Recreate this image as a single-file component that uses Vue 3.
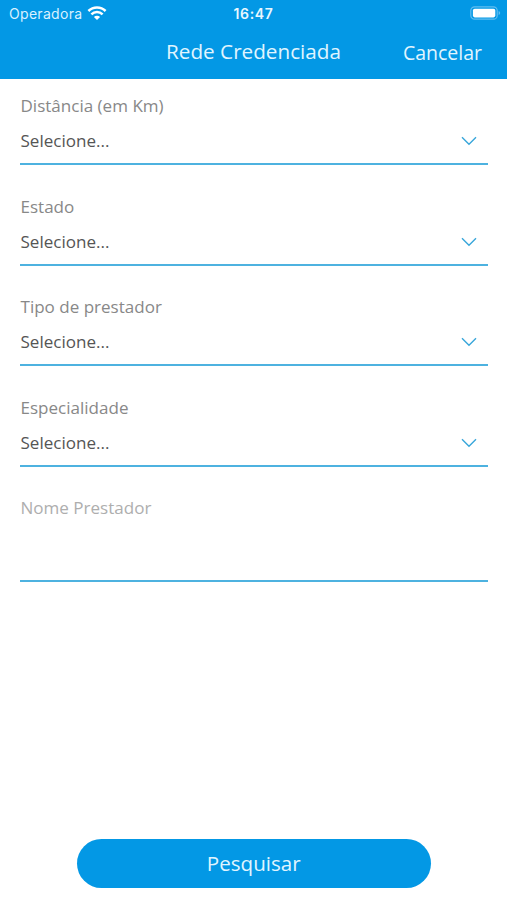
<script setup>
const fields = ['Distância (em Km)', 'Estado', 'Tipo de prestador', 'Especialidade']
</script>

<template>
  <main class="screen">
    <header class="header">
      <div class="status">
        <div class="carrier">
          <span class="carrier-name">Operadora</span>
          <svg class="wifi" width="20" height="14" viewBox="0 0 20 14">
            <path d="M1.4 5A12.3 12.3 0 0 1 18.6 5M4.4 8.3A8 8 0 0 1 15.6 8.3" fill="none" stroke="#fff" stroke-width="2.5" />
            <path d="M10 14L6.9 11A4.4 4.4 0 0 1 13.1 11Z" fill="#fff" />
          </svg>
        </div>
        <span class="time">16:47</span>
        <svg class="battery" width="31" height="14" viewBox="0 0 31 14">
          <rect x=".8" y=".8" width="26.4" height="12.4" rx="3.8" fill="none" stroke="#62bdf0" stroke-width="1.2" />
          <rect x="2.9" y="2.8" width="22.4" height="8.6" rx="1.8" fill="#fff" />
          <path d="M28.6 4.9Q30.2 5.5 30.2 7T28.6 9.1Z" fill="#62bdf0" />
        </svg>
      </div>
      <div class="nav">
        <h1 class="title">Rede Credenciada</h1>
        <button class="cancel">Cancelar</button>
      </div>
    </header>
    <form class="form">
      <div v-for="field in fields" :key="field" class="field">
        <span class="label">{{ field }}</span>
        <div class="select">
          <span>Selecione...</span>
          <svg width="16" height="10" viewBox="0 0 16 10">
            <path d="M1 1.2L8 8.2L15 1.2" fill="none" stroke="#38a6da" stroke-width="1.4" />
          </svg>
        </div>
      </div>
      <div class="field name"><span class="label">Nome Prestador</span></div>
    </form>
    <button class="search">Pesquisar</button>
  </main>
</template>

<style>
body { background: #fff; }
</style>

<style scoped>
.screen { width: 507px; height: 900px; display: flex; flex-direction: column; font-family: "Open Sans", sans-serif; background: #fff; overflow: hidden; }
.header { height: 79px; background: #0398e5; color: #fff; flex: none; }
.status { height: 26px; display: grid; grid-template-columns: 1fr auto 1fr; align-items: center; padding: 0 6px 0 9px; font-family: Inter, sans-serif; font-size: 14px; }
.carrier { display: flex; align-items: center; gap: 5px; }
.carrier-name { letter-spacing: .3px; color: #d9f1ff; padding-top: 1px; }
.time { font-weight: 600; letter-spacing: .7px; margin-right: 3px; padding-top: 1px; color: #e8f7ff; }
.battery { justify-self: end; }
.nav { height: 52px; display: grid; grid-template-columns: 1fr auto 1fr; align-items: center; color: #e0f5ff; }
.title { grid-column: 2; margin: 0; padding-bottom: 2px; font-size: 20.7px; line-height: 28px; font-weight: 400; }
.cancel { justify-self: end; margin-right: 25px; padding: 2px 0 0; border: 0; background: none; color: inherit; font: 400 19.5px/28px "Open Sans", sans-serif; }
.form { padding: 0 19.5px 0 20px; flex: 1; }
.field { height: 100.6px; box-sizing: border-box; padding-top: 16px; }
.label { display: block; padding-left: .5px; font-size: 17.05px; line-height: 22px; color: #888; }
.select { display: flex; justify-content: space-between; height: 48px; box-sizing: border-box; padding: 13px 10.5px 0 .5px; border-bottom: 2px solid #4db2e0; font-size: 17.05px; line-height: 22px; color: #555; }
.select svg { margin-top: 6px; }
.name { border-bottom: 2px solid #4db2e0; }
.name .label { color: #aeaeae; }
.search { width: 354.5px; height: 49px; margin: 0 0 12px 76.5px; padding: 0 0 2px; flex: none; border: 0; border-radius: 25px; background: #0398e5; color: #e0f5ff; font: 400 20.6px/28px "Open Sans", sans-serif; }
</style>
